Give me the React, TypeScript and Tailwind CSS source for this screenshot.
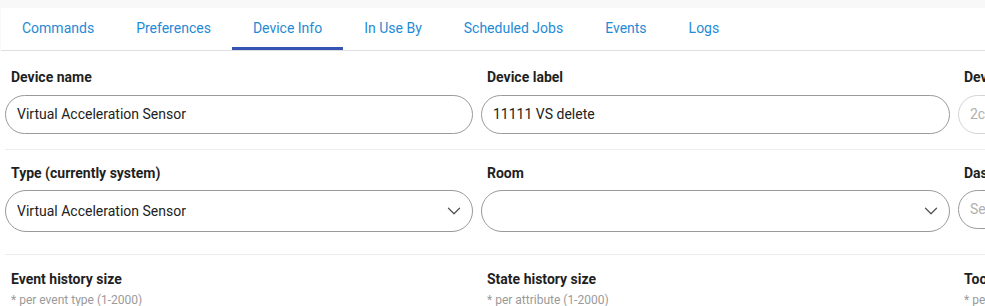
import { ChevronDown } from 'lucide-react';

const tabs = ['Commands', 'Preferences', 'Device Info', 'In Use By', 'Scheduled Jobs', 'Events', 'Logs'];

function Label({ children }: { children: React.ReactNode }) {
  return <div className="pl-[6px] h-[20px] leading-[20px] text-[14px] font-bold text-[#1f1f1f]">{children}</div>;
}

function TextBox({ value, disabled }: { value: string; disabled?: boolean }) {
  return (
    <div
      className={`h-[39px] rounded-full border flex items-center px-[11px] text-[14px] whitespace-nowrap overflow-hidden ${
        disabled ? 'border-[#d4d4d4] text-[#b0b0b0]' : 'border-[#9a9a9a] text-[#222]'
      }`}
    >
      {value}
    </div>
  );
}

function SelectBox({ value, placeholder, short }: { value?: string; placeholder?: string; short?: boolean }) {
  return (
    <div
      className={`${short ? 'h-[39px]' : 'h-[42px]'} rounded-full border border-[#9a9a9a] flex items-center justify-between pl-[11px] pr-[7px] text-[14px] whitespace-nowrap overflow-hidden`}
    >
      {value ? <span className="text-[#222]">{value}</span> : <span className="text-[#b0b0b0]">{placeholder}</span>}
      <ChevronDown size={22} strokeWidth={1.4} className="text-[#555] shrink-0" />
    </div>
  );
}

function Divider() {
  return <div className="ml-[5px] h-px bg-[#ececec]" />;
}

export default function App() {
  return (
    <div className="w-[985px] h-[306px] overflow-hidden bg-[#f8f8f8] font-['Roboto',sans-serif]">
      {/* Tabs */}
      <div className="mt-[8px] ml-[1px] h-[43px] bg-white border-b border-[#dedede] flex">
        {tabs.map((t) => (
          <div
            key={t}
            className={`h-full px-[21px] flex items-center text-[14px] text-[#1f8ad6] border-b-[3px] ${
              t === 'Device Info' ? 'border-[#3553b3]' : 'border-transparent'
            } pt-[2px]`}
          >
            {t}
          </div>
        ))}
      </div>

      {/* Content */}
      <div className="bg-white pt-[16px] h-[256px]">
        <div className="grid grid-cols-[468px_469px_469px] gap-x-[8px] pl-[5px]">
          <div>
            <Label>Device name</Label>
            <div className="mt-[8px]"><TextBox value="Virtual Acceleration Sensor" /></div>
          </div>
          <div>
            <Label>Device label</Label>
            <div className="mt-[8px]"><TextBox value="11111 VS delete" /></div>
          </div>
          <div>
            <Label>Device Network Id</Label>
            <div className="mt-[8px]"><TextBox value="2c7f0a1e-5b3d-4e8a-9c21-8f6d3b2a1e07" disabled /></div>
          </div>
        </div>
        <div className="mt-[15px]"><Divider /></div>

        <div className="grid grid-cols-[468px_469px_469px] gap-x-[8px] pl-[5px] mt-[13px]">
          <div>
            <Label>Type (currently system)</Label>
            <div className="mt-[7px]"><SelectBox value="Virtual Acceleration Sensor" /></div>
          </div>
          <div>
            <Label>Room</Label>
            <div className="mt-[7px]"><SelectBox /></div>
          </div>
          <div>
            <Label>Dashboards</Label>
            <div className="mt-[7px]"><SelectBox placeholder="Select dashboards" short /></div>
          </div>
        </div>
        <div className="mt-[22px]"><Divider /></div>

        <div className="grid grid-cols-[468px_469px_469px] gap-x-[8px] pl-[5px] mt-[14px]">
          <div>
            <Label>Event history size</Label>
            <div className="pl-[6px] mt-[2px] text-[12px] text-[#9a9a9a]">* per event type (1-2000)</div>
          </div>
          <div>
            <Label>State history size</Label>
            <div className="pl-[6px] mt-[2px] text-[12px] text-[#9a9a9a]">* per attribute (1-2000)</div>
          </div>
          <div>
            <Label>Too many events alert threshold</Label>
            <div className="pl-[6px] mt-[2px] text-[12px] text-[#9a9a9a]">* per minute</div>
          </div>
        </div>
      </div>
    </div>
  );
}
